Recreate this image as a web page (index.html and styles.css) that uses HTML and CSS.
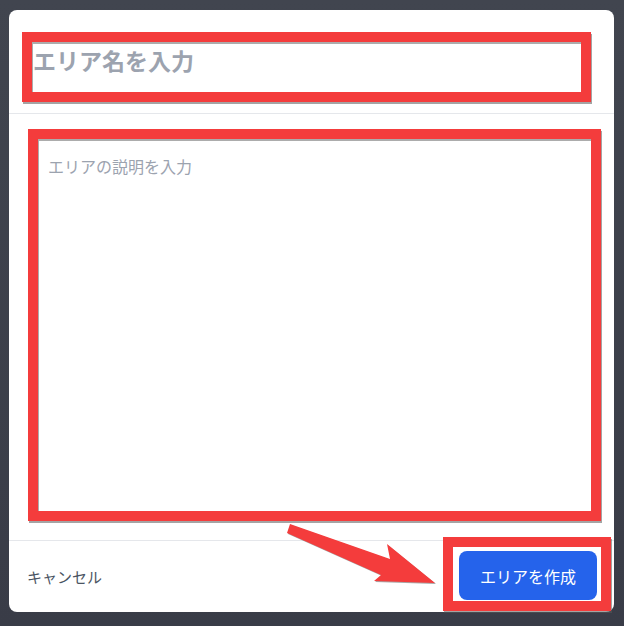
FILE: index.html
```html
<!DOCTYPE html>
<html lang="ja">
<head>
<meta charset="utf-8">
<title>エリアを作成</title>
<link rel="stylesheet" href="styles.css">
</head>
<body>
<div class="modal">
  <div class="modal-header">
    <div class="mark mark-title">
      <div class="title-input">エリア名を入力</div>
    </div>
  </div>
  <div class="modal-body">
    <div class="mark mark-desc">
      <div class="desc-input">エリアの説明を入力</div>
    </div>
  </div>
  <div class="modal-footer">
    <span class="cancel">キャンセル</span>
    <div class="mark mark-button">
      <button class="btn-primary">エリアを作成</button>
    </div>
  </div>
</div>
<svg class="arrow" width="624" height="626" viewBox="0 0 624 626">
  <polygon points="290,524 390,559 387,544 435,583 374,581 381,575 287,533" fill="#f43c3c"/>
</svg>
</body>
</html>
```
FILE: styles.css
```css
* { box-sizing: border-box; }
html, body { margin: 0; padding: 0; }
body {
  width: 624px;
  height: 626px;
  overflow: hidden;
  background: linear-gradient(180deg, #41454f 0%, #393c47 100%);
  font-family: "Noto Sans CJK JP", "Noto Sans", sans-serif;
  position: relative;
}
.modal {
  margin: 10px 0 0 9px;
  width: 605px;
  height: 602px;
  background: #ffffff;
  border-radius: 8px;
  display: flex;
  flex-direction: column;
}
.mark {
  border: 10px solid #f43c3c;
  box-shadow: 1px 2px 0 rgba(90, 90, 90, 0.55);
}
.modal-header {
  padding: 22px 23px 11px 13px;
  border-bottom: 1px solid #e5e7eb;
}
.mark-title { height: 70px; }
.title-input {
  height: 50px;
  padding: 2px 0 0 1px;
  font-size: 23px;
  line-height: 32px;
  font-weight: 700;
  color: #9ca3af;
  box-shadow: inset 1px 2px 0 rgba(90, 90, 90, 0.5);
}
.modal-body {
  padding: 15px 13px 19px 19px;
  border-bottom: 1px solid #e5e7eb;
}
.mark-desc { height: 392px; }
.desc-input {
  height: 100%;
  padding: 15px 0 0 10px;
  font-size: 16px;
  line-height: 24px;
  color: #9ca3af;
  box-shadow: inset 1px 2px 0 rgba(90, 90, 90, 0.5);
}
.modal-footer {
  height: 71px;
  display: flex;
  justify-content: space-between;
  align-items: center;
  padding: 0 3px 0 18px;
}
.cancel {
  font-size: 15px;
  color: #4b5563;
  line-height: 22px;
}
.mark-button {
  align-self: flex-start;
  margin-top: -4px;
  width: 168px;
  height: 74px;
  padding: 4px 4px 1px 6px;
  background: #ffffff;
  position: relative;
  z-index: 1;
}
.btn-primary {
  width: 138px;
  height: 49px;
  border: none;
  border-radius: 8px;
  background: #2563eb;
  color: #ffffff;
  font-family: "Noto Sans CJK JP", "Noto Sans", sans-serif;
  font-size: 16px;
  font-weight: 400;
  padding: 0;
}
.arrow {
  position: absolute;
  left: 0;
  top: 0;
  pointer-events: none;
  filter: drop-shadow(1px 1px 0 rgba(80, 80, 80, 0.5));
}
```
